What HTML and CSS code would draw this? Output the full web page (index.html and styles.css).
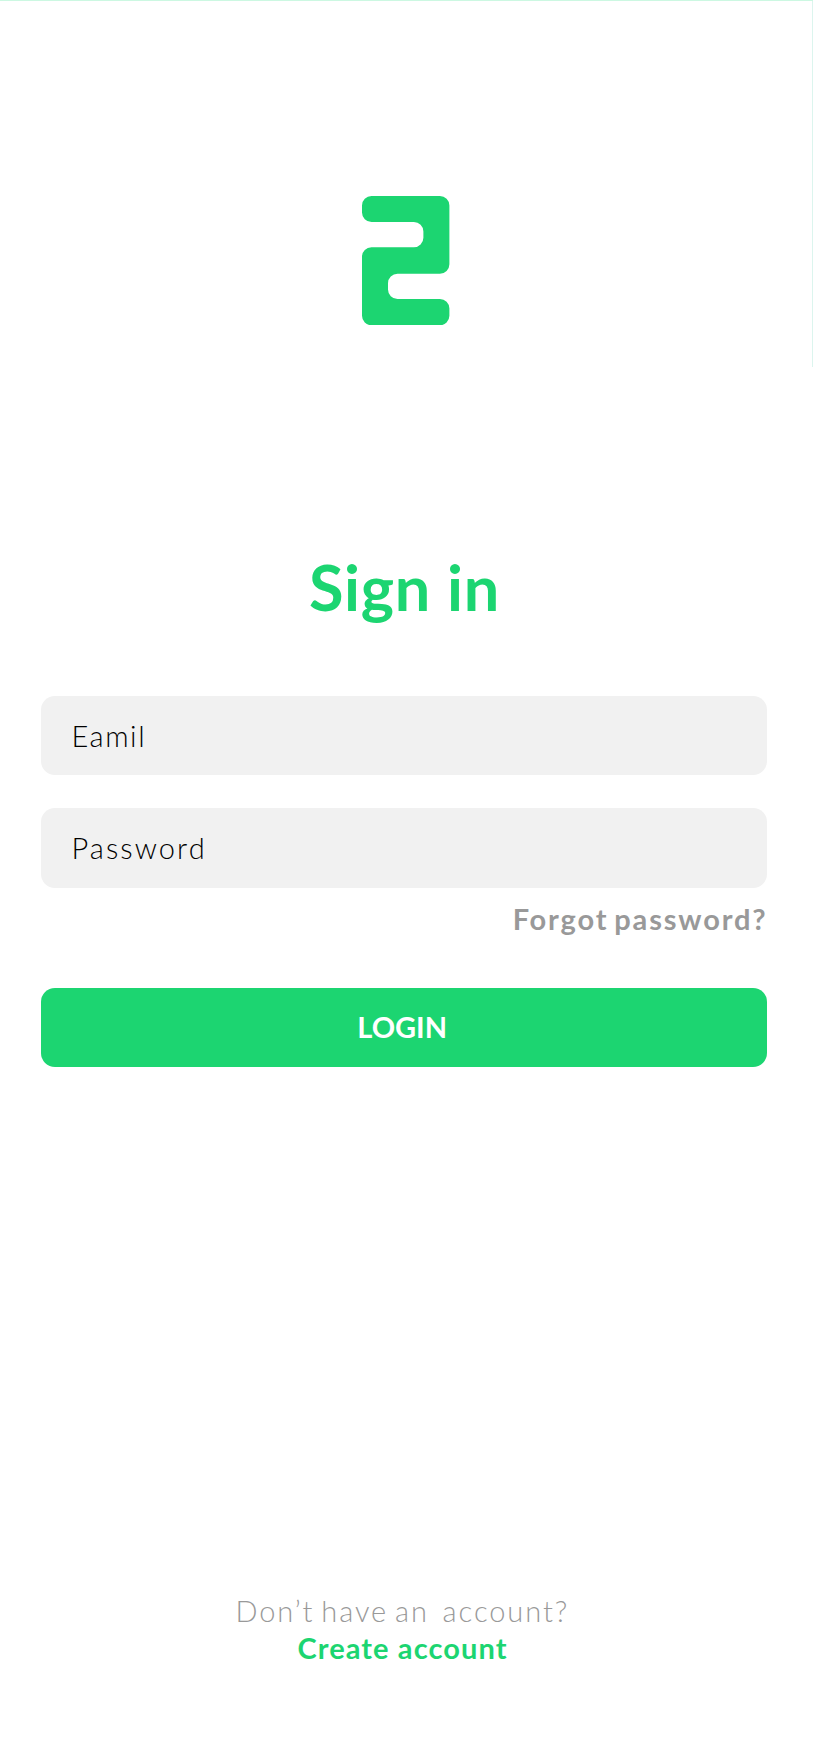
FILE: index.html
```html
<!DOCTYPE html>
<html lang="en">
<head>
<meta charset="utf-8">
<title>Sign in</title>
<link rel="stylesheet" href="styles.css">
</head>
<body>
<main class="screen">
  <svg class="logo" viewBox="0 0 87.4 129.3" aria-hidden="true">
    <path d="M9.5 0H77.9A9.5 9.5 0 0 1 87.4 9.5V68.2A9.5 9.5 0 0 1 77.9 77.7H35.5A9.5 9.5 0 0 0 26 87.2V93.5A9.5 9.5 0 0 0 35.5 103H77.9A9.5 9.5 0 0 1 87.4 112.5V119.8A9.5 9.5 0 0 1 77.9 129.3H9.5A9.5 9.5 0 0 1 0 119.8V60.8A9.5 9.5 0 0 1 9.5 51.3H51.9A9.5 9.5 0 0 0 61.4 41.8V35.5A9.5 9.5 0 0 0 51.9 26H9.5A9.5 9.5 0 0 1 0 16.5V9.5A9.5 9.5 0 0 1 9.5 0Z"/>
  </svg>
  <h1 class="title"><span>Sign in</span></h1>
  <form class="form">
    <div class="field"><span class="email">Eamil</span></div>
    <div class="field"><span class="password">Password</span></div>
    <a class="forgot">Forgot password?</a>
    <button class="login" type="button"><span>LOGIN</span></button>
  </form>
  <footer class="signup">
    <span class="question">Don’t have an&nbsp; account?</span>
    <a class="create">Create account</a>
  </footer>
</main>
</body>
</html>
```
FILE: styles.css
```css
* { box-sizing: border-box; }
body {
  margin: 0;
  background: linear-gradient(#dcf5ee, #dcf5ee) right top / 1px 367px no-repeat #fff;
  font-family: Lato, "Open Sans", sans-serif;
}
.screen {
  display: flex;
  flex-direction: column;
  height: 1747px;
  border-top: 1px solid #ccf8e2;
  padding: 195px 46px 0 41.4px;
}
.logo {
  width: 87.4px;
  height: 129.3px;
  margin-left: 321.1px;
  fill: #1cd571;
}
.title {
  margin: 221.7px 0 0 267.5px;
  font-size: 63px;
  line-height: 80px;
  font-weight: 700;
  letter-spacing: 0.7px;
  color: #1cd571;
  white-space: nowrap;
}
.form {
  display: flex;
  flex-direction: column;
  margin-top: 69px;
}
.field {
  height: 79.3px;
  margin-bottom: 33px;
  padding-left: 30px;
  border-radius: 14px;
  background: #f1f1f1;
  font-size: 29px;
  font-weight: 300;
  line-height: 79px;
  color: #000;
}
.email { letter-spacing: 1.6px; }
.password { letter-spacing: 2.1px; }
.forgot {
  align-self: flex-end;
  height: 40px;
  margin-top: -22px;
  margin-right: -0.5px;
  font-size: 29px;
  font-weight: 700;
  line-height: 40px;
  letter-spacing: 1.85px;
  word-spacing: -3px;
  color: #999;
  white-space: nowrap;
}
.login {
  height: 79.5px;
  margin-top: 49px;
  padding: 0 4px 0 0;
  border: 0;
  border-radius: 14px;
  background: #1cd571;
  font: 700 29px/78px Lato, "Open Sans", sans-serif;
  color: #fff;
}
.signup {
  display: flex;
  flex-direction: column;
  align-items: flex-start;
  margin-top: 525px;
  font-size: 29px;
  line-height: 37px;
  white-space: nowrap;
}
.question {
  margin-left: 194px;
  font-weight: 300;
  letter-spacing: 1.95px;
  word-spacing: -3px;
  color: #999;
}
.create {
  margin-left: 256px;
  font-weight: 700;
  letter-spacing: 1.1px;
  color: #1cd571;
}
```
